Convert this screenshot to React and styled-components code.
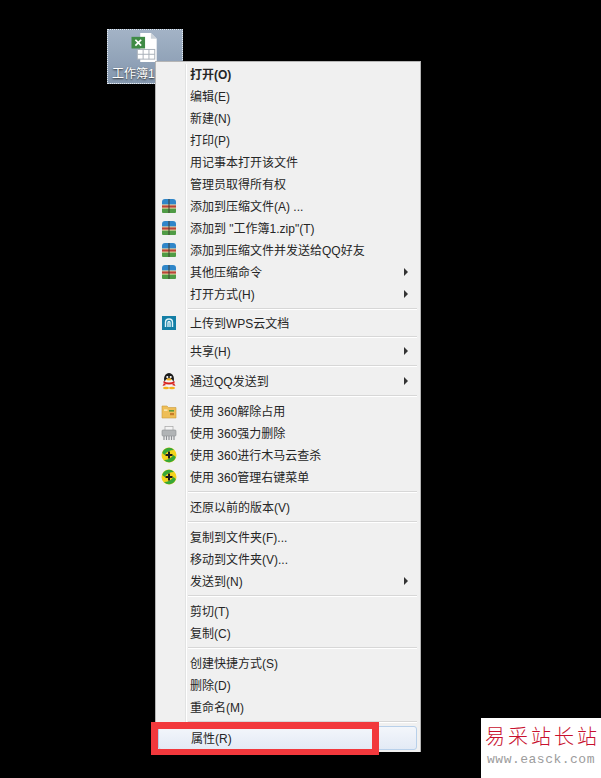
import React from "react";
import styled, { createGlobalStyle } from "styled-components";

const Global = createGlobalStyle`
  html, body { margin: 0; padding: 0; background: #000; }
  body { font-family: "Liberation Sans", "Noto Sans CJK SC", sans-serif; }
`;

const Desktop = styled.div`
  position: relative;
  width: 601px;
  height: 778px;
  background: #000;
  overflow: hidden;
`;

const FileIcon = styled.div`
  position: absolute;
  left: 107px;
  top: 29px;
  width: 76px;
  height: 55px;
  box-sizing: border-box;
  border: 1px dotted #e6ecf2;
  background: linear-gradient(#a3b3c6, #8497ae);
  display: flex;
  flex-direction: column;
  align-items: flex-start;
  padding: 2px 0 0 3px;
`;

const FileGlyph = styled.svg`
  display: block;
  margin-left: 20px;
`;

const FileName = styled.span`
  font-size: 12px;
  line-height: 18px;
  color: #fff;
  text-shadow: 0 1px 2px #222;
  margin-top: 2px;
  margin-left: 1px;
`;

const Menu = styled.div`
  position: absolute;
  left: 155px;
  top: 61px;
  width: 266px;
  height: 691px;
  box-sizing: border-box;
  padding: 1px 3px 2px 2px;
  background: #f0f0f0;
  border: 1px solid #b5b5b5;
  border-width: 1px 1px 0 1px;
  color: #262626;
  font-size: 12px;
`;

const Gutter = styled.div`
  position: absolute;
  left: 29px;
  top: 2px;
  bottom: 2px;
  width: 1px;
  background: #e2e3e3;
  border-right: 1px solid #fff;
`;

const Row = styled.div`
  position: relative;
  display: flex;
  align-items: center;
  height: 22px;
  font-weight: ${(p) => (p.$bold ? 700 : 400)};
  ${(p) =>
    p.$hover &&
    `
    height: 24px;
    box-sizing: border-box;
    border: 1px solid #b8d0ea;
    border-radius: 3px;
    background: linear-gradient(#f3f6fb, #e3eaf5);
  `}
`;

const IconSlot = styled.span`
  width: 28px;
  box-sizing: border-box;
  padding-right: 6px;
  flex: none;
  display: flex;
  align-items: center;
  justify-content: center;
`;

const Label = styled.span`
  padding-left: 4px;
  margin-bottom: 2px;
  white-space: pre;
`;

const Arrow = styled.span`
  position: absolute;
  right: 9px;
  top: 7px;
  width: 0;
  height: 0;
  border-left: 4px solid #333;
  border-top: 4px solid transparent;
  border-bottom: 4px solid transparent;
`;

const Separator = styled.div`
  height: ${(p) => p.$h || 8}px;
  display: flex;
  align-items: center;
  padding-left: 30px;
  &::after {
    content: "";
    display: block;
    flex: 1;
    height: 1px;
    background: #d7d7d7;
    border-bottom: 1px solid #fff;
  }
`;

const Highlight = styled.div`
  position: absolute;
  left: 151px;
  top: 722px;
  width: 228px;
  height: 33px;
  box-sizing: border-box;
  border: solid #f2383c;
  border-width: 7px 7px 6px 7px;
`;

const Watermark = styled.div`
  position: absolute;
  left: 481px;
  top: 718px;
  width: 120px;
  height: 60px;
  background: #fff;
  display: flex;
  flex-direction: column;
  align-items: center;
  padding-top: 4px;
  box-sizing: border-box;
`;

const MarkTitle = styled.span`
  color: #c8102e;
  font-family: "Noto Sans CJK SC", sans-serif;
  font-size: 20px;
  line-height: 28px;
  font-weight: 300;
  letter-spacing: 3px;
  white-space: nowrap;
  padding-left: 3px;
`;

const MarkUrl = styled.span`
  color: #9c9c9c;
  font-family: "Liberation Mono", monospace;
  font-size: 13px;
  line-height: 20px;
  white-space: nowrap;
  letter-spacing: 0.5px;
`;

const RarIcon = () => (
  <svg width="16" height="16" viewBox="0 0 16 16">
    <path d="M1 4 Q1 1 4 1 H12 Q15 1 15 4 V7 H1Z" fill="#2f86c9" />
    <rect x="1" y="7" width="14" height="3" fill="#b8443a" />
    <path d="M1 10 H15 V14 Q15 15 14 15 H2 Q1 15 1 14Z" fill="#4f9b45" />
    <rect x="1" y="6.4" width="14" height="1" fill="#ead9a6" />
    <rect x="1" y="9.6" width="14" height="1" fill="#ead9a6" />
    <rect x="7.2" y="1" width="1.6" height="14" fill="#3d3a33" opacity="0.6" />
  </svg>
);

const WpsIcon = () => (
  <svg width="14" height="14" viewBox="0 0 14 14">
    <rect width="14" height="14" fill="#147fa6" />
    <path d="M3.5 11 V6.5 Q3.5 3 7 3 Q10.5 3 10.5 6.5 V11 M6 11 V6.5 Q6 5.5 7 5.5 Q8 5.5 8 6.5 V11" fill="none" stroke="#dff3f8" strokeWidth="1.4" />
  </svg>
);

const QQIcon = () => (
  <svg width="16" height="18" viewBox="0 0 16 18">
    <ellipse cx="8" cy="7" rx="5" ry="6" fill="#1a1a1a" />
    <ellipse cx="8" cy="11" rx="4.5" ry="4.5" fill="#f4f4f4" />
    <circle cx="6.3" cy="5" r="1.1" fill="#fff" />
    <circle cx="9.7" cy="5" r="1.1" fill="#fff" />
    <ellipse cx="8" cy="7.4" rx="2.6" ry="1.1" fill="#f2b01e" />
    <path d="M2.5 9 Q8 12 13.5 9 L13.5 11 Q8 14 2.5 11Z" fill="#d9231f" />
    <path d="M3 11 L1.5 14 L5 13Z M13 11 L14.5 14 L11 13Z" fill="#d9231f" />
    <ellipse cx="5" cy="16" rx="3" ry="1.3" fill="#f2b01e" />
    <ellipse cx="11" cy="16" rx="3" ry="1.3" fill="#f2b01e" />
  </svg>
);

const UnlockIcon = () => (
  <svg width="16" height="16" viewBox="0 0 16 16">
    <path d="M1 3 H6 L7.5 4.5 H15 V15 H1Z" fill="#eebe57" stroke="#c99a3a" strokeWidth="0.6" />
    <rect x="8" y="7" width="5" height="1.6" fill="#5d9c3b" />
    <rect x="9" y="10" width="4" height="2.2" fill="#c77b2a" />
    <rect x="3" y="6.5" width="3.5" height="1.2" fill="#fff3c9" />
  </svg>
);

const ShredIcon = () => (
  <svg width="16" height="16" viewBox="0 0 16 16">
    <rect x="4" y="1.5" width="8" height="4" fill="#f4f4f4" stroke="#a5a5a5" strokeWidth="0.7" />
    <rect x="1" y="5" width="14" height="6" rx="1" fill="#b1b4b6" stroke="#8a8d90" strokeWidth="0.6" />
    <path d="M3 11 V15 M5.5 11 V15 M8 11 V15 M10.5 11 V15 M13 11 V15" stroke="#8d9094" strokeWidth="1.2" />
  </svg>
);

const Safe360Icon = () => (
  <svg width="16" height="16" viewBox="0 0 16 16">
    <circle cx="8" cy="8" r="7.5" fill="#f3d31c" />
    <path d="M1.2 6 A7 7 0 0 1 13 3 Q7 3 3.5 8Z" fill="#37a837" />
    <path d="M14.8 10 A7 7 0 0 1 3 13 Q9 13 12.5 8Z" fill="#37a837" />
    <path d="M8 4.5 V11.5 M4.5 8 H11.5" stroke="#1c1c1c" strokeWidth="2" />
  </svg>
);

const sections = [
  {
    sep: 7,
    items: [
      { label: "打开(O)", bold: true },
      { label: "编辑(E)" },
      { label: "新建(N)" },
      { label: "打印(P)" },
      { label: "用记事本打开该文件" },
      { label: "管理员取得所有权" },
      { label: "添加到压缩文件(A) ...", icon: <RarIcon /> },
      { label: '添加到 "工作簿1.zip"(T)', icon: <RarIcon /> },
      { label: "添加到压缩文件并发送给QQ好友", icon: <RarIcon /> },
      { label: "其他压缩命令", icon: <RarIcon />, more: true },
      { label: "打开方式(H)", more: true },
    ],
  },
  { sep: 6, items: [{ label: "上传到WPS云文档", icon: <WpsIcon /> }] },
  { sep: 8, items: [{ label: "共享(H)", more: true }] },
  { sep: 8, items: [{ label: "通过QQ发送到", icon: <QQIcon />, more: true }] },
  {
    sep: 8,
    items: [
      { label: "使用 360解除占用", icon: <UnlockIcon /> },
      { label: "使用 360强力删除", icon: <ShredIcon /> },
      { label: "使用 360进行木马云查杀", icon: <Safe360Icon /> },
      { label: "使用 360管理右键菜单", icon: <Safe360Icon /> },
    ],
  },
  { sep: 8, items: [{ label: "还原以前的版本(V)" }] },
  {
    sep: 8,
    items: [
      { label: "复制到文件夹(F)..." },
      { label: "移动到文件夹(V)..." },
      { label: "发送到(N)", more: true },
    ],
  },
  { sep: 8, items: [{ label: "剪切(T)" }, { label: "复制(C)" }] },
  {
    sep: 8,
    items: [
      { label: "创建快捷方式(S)" },
      { label: "删除(D)" },
      { label: "重命名(M)" },
    ],
  },
];

const App = () => {
  return (
    <Desktop>
      <Global />
      <FileIcon>
        <FileGlyph width="32" height="32" viewBox="0 0 32 32">
          <path d="M9 1 H20 L26 7 V31 H9Z" fill="#fff" />
          <path d="M20 1 L26 7 H20Z" fill="#ccd3da" />
          <rect x="6" y="18" width="18" height="10" fill="#fff" stroke="#a8b0b8" />
          <path d="M6 23 H24 M12 18 V28 M18 18 V28" stroke="#a8b0b8" />
          <rect x="0" y="5" width="14" height="12" fill="#3f8b45" />
          <path d="M4 8 L10 14 M10 8 L4 14" stroke="#fff" strokeWidth="1.8" />
        </FileGlyph>
        <FileName>工作簿1</FileName>
      </FileIcon>
      <Menu>
        <Gutter />
        {sections.map((section, i) => (
          <React.Fragment key={i}>
            {section.items.map((item) => (
              <Row key={item.label} $bold={item.bold}>
                <IconSlot>{item.icon}</IconSlot>
                <Label>{item.label}</Label>
                {item.more && <Arrow />}
              </Row>
            ))}
            <Separator $h={section.sep} />
          </React.Fragment>
        ))}
        <Row $hover>
          <IconSlot />
          <Label>属性(R)</Label>
        </Row>
      </Menu>
      <Highlight />
      <Watermark>
        <MarkTitle>易采站长站</MarkTitle>
        <MarkUrl>www.easck.com</MarkUrl>
      </Watermark>
    </Desktop>
  );
};

export default App;
